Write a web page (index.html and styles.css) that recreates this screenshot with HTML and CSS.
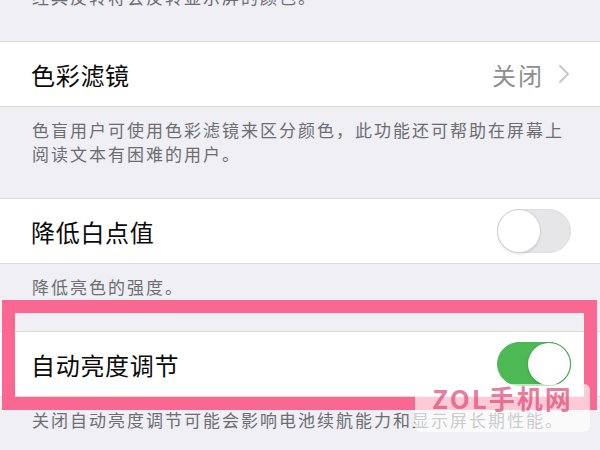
FILE: index.html
```html
<!DOCTYPE html>
<html lang="zh-CN">
<head>
    <meta charset="UTF-8">
    <meta name="viewport" content="width=device-width, initial-scale=1.0">
    <title>显示与文字大小</title>
    <link rel="stylesheet" href="styles.css">
</head>
<body>
    <div class="note top">经典反转将会反转显示屏的颜色。</div>

    <div class="group">
        <div class="cell">
            <span class="label">色彩滤镜</span>
            <span class="value">关闭</span>
            <svg class="chevron" width="12" height="20" viewBox="0 0 12 20">
                <polyline points="2,2 10,10 2,18" fill="none" stroke="#c7c7cc" stroke-width="2" stroke-linecap="round" stroke-linejoin="round"/>
            </svg>
        </div>
        <div class="note">色盲用户可使用色彩滤镜来区分颜色，此功能还可帮助在屏幕上阅读文本有困难的用户。</div>
    </div>

    <div class="group">
        <div class="cell">
            <span class="label">降低白点值</span>
            <span class="switch"><span class="knob"></span></span>
        </div>
        <div class="note">降低亮色的强度。</div>
    </div>

    <div class="group">
        <div class="cell">
            <span class="label">自动亮度调节</span>
            <span class="switch on"><span class="knob"></span></span>
        </div>
        <div class="note">关闭自动亮度调节可能会影响电池续航能力和显示屏长期性能。</div>
    </div>

    <!-- highlight frame drawn over the screenshot -->
    <div class="highlight"></div>

    <div class="watermark">
        <div class="wm-logo">ZOL手机网</div>
    </div>
</body>
</html>
```

FILE: styles.css
```css
body {
    margin: 0;
    background-color: #efeff4;
    font-family: "Noto Sans CJK SC", "Noto Sans", sans-serif;
    position: relative;
    overflow: hidden;
    height: 450px;
}
.group {
    margin-top: 32px;
}
.group:first-of-type {
    margin-top: 33px;
}
.cell {
    display: flex;
    align-items: center;
    height: 64px;
    padding: 0 29px 0 31px;
    background-color: #fff;
    border-top: 1px solid #dcdce0;
    border-bottom: 1px solid #dcdce0;
}
.label {
    flex: 1;
    font-size: 24px;
    letter-spacing: 0.7px;
    color: #0a0a0a;
}
.value {
    font-size: 24px;
    letter-spacing: 2px;
    color: #8e8e93;
    margin-right: 14px;
}
.chevron {
    display: block;
    margin-right: 1px;
}
.note {
    padding: 11px 30px 0 32px;
    font-size: 17px;
    line-height: 24px;
    letter-spacing: 2px;
    color: #6d6d72;
}
.note.top {
    padding-top: 0;
    margin-top: -15px;
}
.switch {
    position: relative;
    width: 74px;
    height: 44px;
    box-sizing: border-box;
    border-radius: 22px;
    background-color: #e6e6e9;
    border: 1px solid #dedee2;
}
.switch .knob {
    position: absolute;
    top: 0;
    left: 0;
    width: 42px;
    height: 42px;
    border-radius: 50%;
    background-color: #fff;
    box-shadow: 0 0 0 1px #d2d2d6, 0 2px 3px rgba(0, 0, 0, 0.12);
}
.switch.on {
    background-color: #4cb955;
    border-color: #4cb955;
}
.switch.on .knob {
    left: auto;
    right: 0;
    box-shadow: 0 0 0 1px #48a850, 0 2px 3px rgba(0, 0, 0, 0.12);
}
.highlight {
    position: absolute;
    left: 2px;
    top: 300px;
    width: 595px;
    height: 110px;
    box-sizing: border-box;
    border: 13px solid #fa6891;
}
.watermark {
    position: absolute;
    left: 415px;
    top: 384px;
    width: 175px;
    height: 48px;
    border-radius: 6px;
    background-color: rgba(255, 255, 255, 0.65);
    text-align: center;
}
.wm-logo {
    font-size: 26px;
    font-weight: bold;
    line-height: 28px;
    letter-spacing: 2px;
    color: rgba(220, 70, 115, 0.7);
}
```
